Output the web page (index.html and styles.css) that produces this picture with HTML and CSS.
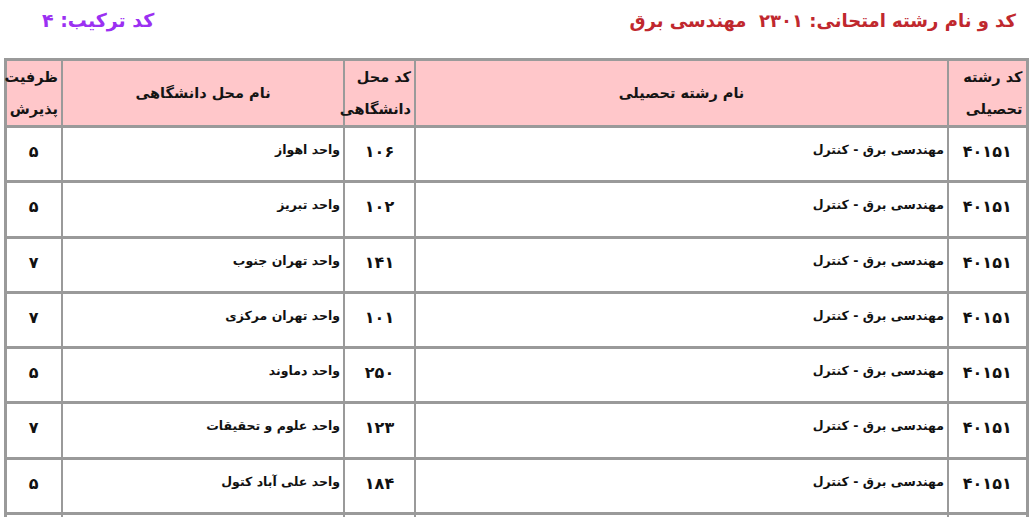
FILE: index.html
```html
<!DOCTYPE html>
<html lang="fa" dir="rtl">
<head>
<meta charset="utf-8">
<title>کد و نام رشته امتحانی</title>
<link rel="stylesheet" href="styles.css">
</head>
<body>
<header class="top">
  <h1 class="title">کد و نام رشته امتحانی: ۲۳۰۱&nbsp; مهندسی برق</h1>
  <div class="combo">کد ترکیب: ۴</div>
</header>
<table class="grid">
  <colgroup>
    <col class="c-code">
    <col class="c-field">
    <col class="c-uni">
    <col class="c-uname">
    <col class="c-cap">
  </colgroup>
  <thead>
    <tr>
      <th class="h-r">کد رشته<br>تحصیلی</th>
      <th class="h-c">نام رشته تحصیلی</th>
      <th class="h-r">کد محل<br>دانشگاهی</th>
      <th class="h-c">نام محل دانشگاهی</th>
      <th class="h-r">ظرفیت<br>پذیرش</th>
    </tr>
  </thead>
  <tbody>
    <tr><td class="num">۴۰۱۵۱</td><td class="txt">مهندسی برق - کنترل</td><td class="num">۱۰۶</td><td class="txt">واحد اهواز</td><td class="num">۵</td></tr>
    <tr><td class="num">۴۰۱۵۱</td><td class="txt">مهندسی برق - کنترل</td><td class="num">۱۰۲</td><td class="txt">واحد تبریز</td><td class="num">۵</td></tr>
    <tr><td class="num">۴۰۱۵۱</td><td class="txt">مهندسی برق - کنترل</td><td class="num">۱۴۱</td><td class="txt">واحد تهران جنوب</td><td class="num">۷</td></tr>
    <tr><td class="num">۴۰۱۵۱</td><td class="txt">مهندسی برق - کنترل</td><td class="num">۱۰۱</td><td class="txt">واحد تهران مرکزی</td><td class="num">۷</td></tr>
    <tr><td class="num">۴۰۱۵۱</td><td class="txt">مهندسی برق - کنترل</td><td class="num">۲۵۰</td><td class="txt">واحد دماوند</td><td class="num">۵</td></tr>
    <tr><td class="num">۴۰۱۵۱</td><td class="txt">مهندسی برق - کنترل</td><td class="num">۱۲۳</td><td class="txt">واحد علوم و تحقیقات</td><td class="num">۷</td></tr>
    <tr><td class="num">۴۰۱۵۱</td><td class="txt">مهندسی برق - کنترل</td><td class="num">۱۸۴</td><td class="txt">واحد علی آباد کتول</td><td class="num">۵</td></tr>
    <tr><td class="num"></td><td class="txt"></td><td class="num"></td><td class="txt"></td><td class="num"></td></tr>
  </tbody>
</table>
</body>
</html>
```
FILE: styles.css
```css
html, body {
  margin: 0;
  padding: 0;
  background: #ffffff;
}

body {
  font-family: "DejaVu Sans", "Noto Sans", sans-serif;
  color: #111111;
  overflow: hidden;
}

.top {
  display: flex;
  justify-content: space-between;
  align-items: center;
  padding: 5px 16px 0 42px;
  height: 30px;
}

.title {
  margin: 0;
  font-size: 18px;
  font-weight: bold;
  color: #c0282e;
}

.combo {
  font-size: 19px;
  font-weight: bold;
  color: #9b30f2;
}

.grid {
  width: 1024px;
  margin: 23px auto 0;
  border-collapse: collapse;
  table-layout: fixed;
  border: 3px solid #9a9a9a;
}

.c-code { width: 79px; }
.c-field { width: 533px; }
.c-uni { width: 71px; }
.c-uname { width: 282px; }
.c-cap { width: 57px; }

.grid th {
  background: #ffc7ca;
  border: 2px solid #9a9a9a;
  border-bottom-width: 3px;
  height: 64px;
  font-size: 14.5px;
  font-weight: bold;
  line-height: 32px;
  padding: 0 3px;
  color: #141414;
}

.h-r { text-align: right; }
.h-c { text-align: center; }

.grid td {
  border-left: 2px solid #9a9a9a;
  border-right: 2px solid #9a9a9a;
  border-bottom: 3px solid #9a9a9a;
  height: 38.3px;
  vertical-align: top;
  padding: 14px 3px 0;
  font-weight: bold;
}

.num {
  text-align: center;
  font-size: 16px;
}

.txt {
  text-align: right;
  font-size: 12.5px;
}
```
